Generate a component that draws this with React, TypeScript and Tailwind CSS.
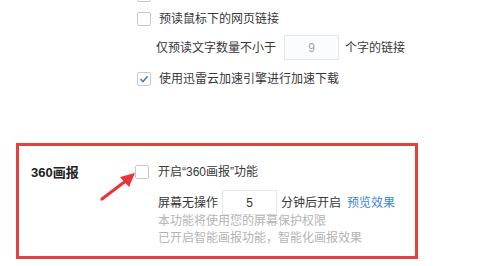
import React from 'react';

const Checkbox = ({ checked = false }: { checked?: boolean }) => (
  <span className="w-[14px] h-[14px] shrink-0 rounded-[2px] border border-[#c9c9c9] bg-white flex items-center justify-center">
    {checked && (
      <svg width="10" height="10" viewBox="0 0 10 10">
        <path d="M1.5 5.2 L4 7.6 L8.6 2.2" fill="none" stroke="#3d7fd9" strokeWidth="1.6" />
      </svg>
    )}
  </span>
);

const NumberBox = ({ value, muted = false }: { value: string; muted?: boolean }) => (
  <span
    className={
      'w-[55px] h-[25px] border border-[#e3e6ea] flex items-center justify-center ' +
      (muted ? 'text-[#a0a4a8] bg-[#fbfcfd]' : 'text-[#333] bg-white')
    }
  >
    {value}
  </span>
);

export default function App() {
  return (
    <div
      className="relative w-[490px] h-[266px] bg-white overflow-hidden text-[12px] text-[#383838]"
      style={{ fontFamily: '"Liberation Sans", "Noto Sans CJK SC", sans-serif' }}
    >
      <div className="pl-[137px]">
        <div className="h-[14px] -mt-[12px] flex items-center">
          <Checkbox />
        </div>
        <div className="h-[14px] mt-[10px] flex items-center gap-[8px]">
          <Checkbox />
          <span>预读鼠标下的网页链接</span>
        </div>
        <div className="mt-[9px] pl-[19px] flex items-center gap-[8px]">
          <span>仅预读文字数量不小于</span>
          <NumberBox value="9" muted />
          <span className="ml-[-2px]">个字的链接</span>
        </div>
        <div className="h-[14px] mt-[12px] flex items-center gap-[8px]">
          <Checkbox checked />
          <span>使用迅雷云加速引擎进行加速下载</span>
        </div>
      </div>

      <div className="ml-[16px] mt-[57px] w-[402px] h-[116px] border-[3px] border-[#e2413f] flex">
        <div className="w-[116px] pl-[12px] pt-[17px] font-bold text-[13px] text-[#222]">360画报</div>
        <div className="pt-[19px]">
          <div className="h-[14px] flex items-center gap-[9px]">
            <Checkbox />
            <span>开启“360画报”功能</span>
          </div>
          <div className="mt-[11px] pl-[23px] flex items-center gap-[4px]">
            <span>屏幕无操作</span>
            <NumberBox value="5" />
            <span>分钟后开启</span>
            <span className="text-[#3d86d8] ml-[2px]">预览效果</span>
          </div>
          <div className="pl-[23px] -mt-[2px] text-[#b4b4b4] leading-[17px]">
            <div>本功能将使用您的屏幕保护权限</div>
            <div>已开启智能画报功能，智能化画报效果</div>
          </div>
        </div>
      </div>

      <svg className="absolute left-[96px] top-[166px]" width="44" height="38" viewBox="0 0 44 38">
        <path d="M6 33 L31 14" stroke="#e8353a" strokeWidth="3.2" strokeLinecap="round" />
        <path d="M39 7 L24 11 L33 21 Z" fill="#e8353a" />
      </svg>
    </div>
  );
}
